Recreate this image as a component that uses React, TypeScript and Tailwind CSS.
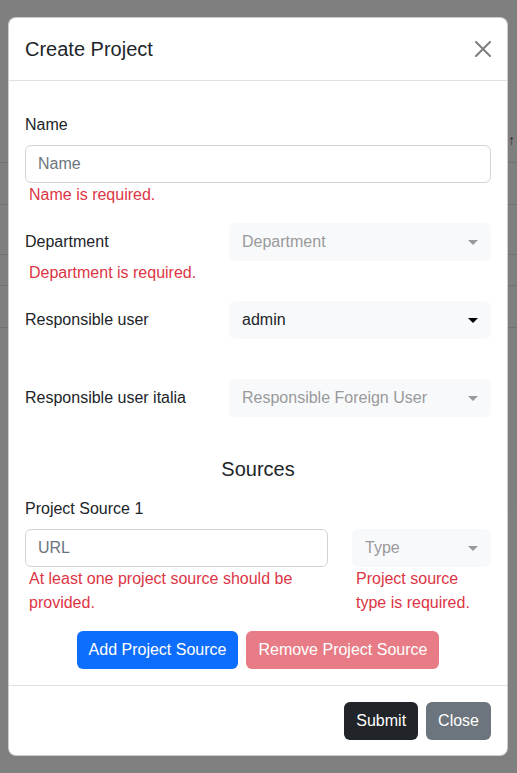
import React from "react";

const font = { fontFamily: '"Liberation Sans", Arial, sans-serif' };

const Caret = ({ dark }: { dark?: boolean }) => (
  <svg width="10" height="5" viewBox="0 0 10 5" className="shrink-0">
    <polygon points="0,0 10,0 5,5" fill={dark ? "#000000" : "#9a9a9a"} />
  </svg>
);

const SelectBox = ({ value, placeholder }: { value?: string; placeholder: string }) => (
  <div className="h-[38px] w-full rounded-[6px] bg-[#f8f9fa] flex items-center justify-between pl-[13px] pr-[13px]">
    <span className={value ? "text-[#212529]" : "text-[#9a9a9a]"}>{value ?? placeholder}</span>
    <Caret dark={!!value} />
  </div>
);

const TextInput = ({ placeholder }: { placeholder: string }) => (
  <input
    placeholder={placeholder}
    className="h-[38px] w-full rounded-[6px] border border-[#ced4da] bg-white px-3 text-[16px] text-[#212529] placeholder:text-[#6c757d] outline-none"
    style={font}
  />
);

const Error = ({ children }: { children: React.ReactNode }) => (
  <div className="pl-1 text-[#dc3545] leading-6">{children}</div>
);

export default function App() {
  return (
    <div className="relative h-[773px] w-full overflow-hidden bg-white text-[16px] leading-6 text-[#212529]" style={font}>
      {/* page behind the modal */}
      <div className="flex flex-col">
        <div className="h-[162px] flex justify-end items-start pt-[130px] pr-[2px] text-[#555] text-sm">↑</div>
        <div className="h-[42px] border-t border-[#dee2e6]" />
        <div className="h-[50px] border-t border-[#dee2e6]" />
        <div className="h-[31px] border-t border-[#dee2e6]" />
        <div className="h-[42px] border-t border-[#dee2e6]" />
        <div className="border-t border-[#dee2e6]" />
      </div>

      {/* backdrop */}
      <div className="absolute inset-0 bg-black/50" />

      {/* modal */}
      <div className="absolute inset-0 pt-[17px]">
        <div className="ml-[8px] w-[500px] rounded-[8px] border border-black/20 bg-white">
          <div className="flex items-center justify-between border-b border-[#dee2e6] p-4">
            <h5 className="text-[20px] leading-[30px] font-medium">Create Project</h5>
            <button className="opacity-50">
              <svg width="16" height="16" viewBox="0 0 16 16" className="block">
                <path
                  fill="#000"
                  d="M.293.293a1 1 0 0 1 1.414 0L8 6.586 14.293.293a1 1 0 1 1 1.414 1.414L9.414 8l6.293 6.293a1 1 0 0 1-1.414 1.414L8 9.414l-6.293 6.293a1 1 0 0 1-1.414-1.414L6.586 8 .293 1.707a1 1 0 0 1 0-1.414z"
                />
              </svg>
            </button>
          </div>

          <div className="px-4 pt-[32px] pb-4">
            <label className="block mb-2">Name</label>
            <TextInput placeholder="Name" />
            <Error>Name is required.</Error>

            <div className="mt-4 grid grid-cols-[192px_1fr] gap-x-3 items-center">
              <span>Department</span>
              <SelectBox placeholder="Department" />
            </div>
            <Error>Department is required.</Error>

            <div className="mt-4 grid grid-cols-[192px_1fr] gap-x-3 items-center">
              <span>Responsible user</span>
              <SelectBox value="admin" placeholder="Responsible user" />
            </div>

            <div className="mt-10 grid grid-cols-[192px_1fr] gap-x-3 items-center">
              <span>Responsible user italia</span>
              <SelectBox placeholder="Responsible Foreign User" />
            </div>

            <h5 className="mt-10 mb-4 text-center text-[20px] leading-6 font-medium">Sources</h5>

            <label className="block mb-2">Project Source 1</label>
            <div className="grid grid-cols-[303px_1fr] gap-x-6">
              <div>
                <TextInput placeholder="URL" />
                <Error>At least one project source should be provided.</Error>
              </div>
              <div>
                <SelectBox placeholder="Type" />
                <Error>Project source type is required.</Error>
              </div>
            </div>

            <div className="mt-4 flex justify-center gap-2">
              <button className="h-[38px] rounded-[6px] bg-[#0d6efd] px-3 text-white">Add Project Source</button>
              <button className="h-[38px] rounded-[6px] bg-[#e87c86] px-3 text-white">Remove Project Source</button>
            </div>
          </div>

          <div className="flex justify-end gap-2 border-t border-[#dee2e6] px-4 pt-4 pb-[15px]">
            <button className="h-[38px] rounded-[6px] bg-[#212529] px-3 text-white">Submit</button>
            <button className="h-[38px] rounded-[6px] bg-[#6c757d] px-3 text-white">Close</button>
          </div>
        </div>
      </div>
    </div>
  );
}
